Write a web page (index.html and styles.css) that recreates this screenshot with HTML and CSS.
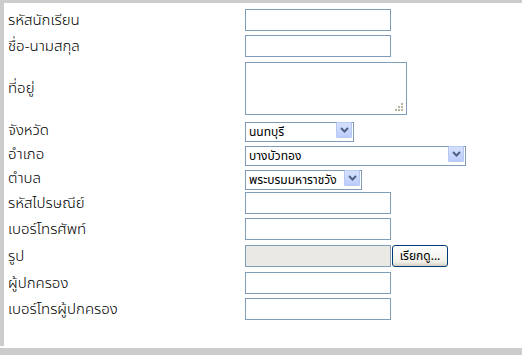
FILE: index.html
```html
<!DOCTYPE html>
<html lang="th">
<head>
    <meta charset="UTF-8">
    <title>ข้อมูลนักเรียน</title>
    <link rel="stylesheet" href="styles.css">
</head>
<body>
    <div id="frame">
        <form id="student-form">
            <label class="lbl">รหัสนักเรียน</label>
            <div class="fld"><input class="txt" type="text"></div>

            <label class="lbl">ชื่อ-นามสกุล</label>
            <div class="fld"><input class="txt" type="text"></div>

            <label class="lbl area-lbl">ที่อยู่</label>
            <div class="fld">
                <span class="area-wrap">
                    <textarea class="area"></textarea>
                    <svg class="grip" width="11" height="11" viewBox="0 0 11 11">
                        <rect x="8" y="2" width="2" height="2" fill="#b9b5a3"/>
                        <rect x="5" y="5" width="2" height="2" fill="#b9b5a3"/>
                        <rect x="8" y="5" width="2" height="2" fill="#b9b5a3"/>
                        <rect x="2" y="8" width="2" height="2" fill="#b9b5a3"/>
                        <rect x="5" y="8" width="2" height="2" fill="#b9b5a3"/>
                        <rect x="8" y="8" width="2" height="2" fill="#b9b5a3"/>
                    </svg>
                </span>
            </div>

            <label class="lbl sel-row">จังหวัด</label>
            <div class="fld sel-row">
                <span class="sel-wrap w-prov">
                    <select class="sel"><option>นนทบุรี</option></select>
                    <span class="sel-btn"><svg width="9" height="6" viewBox="0 0 9 6"><path d="M1 1 L4.5 4.5 L8 1" fill="none" stroke="#4d6185" stroke-width="2"/></svg></span>
                </span>
            </div>

            <label class="lbl sel-row">อำเภอ</label>
            <div class="fld sel-row">
                <span class="sel-wrap w-dist">
                    <select class="sel"><option>บางบัวทอง</option></select>
                    <span class="sel-btn"><svg width="9" height="6" viewBox="0 0 9 6"><path d="M1 1 L4.5 4.5 L8 1" fill="none" stroke="#4d6185" stroke-width="2"/></svg></span>
                </span>
            </div>

            <label class="lbl sel-row">ตำบล</label>
            <div class="fld sel-row">
                <span class="sel-wrap w-sub">
                    <select class="sel"><option>พระบรมมหาราชวัง</option></select>
                    <span class="sel-btn"><svg width="9" height="6" viewBox="0 0 9 6"><path d="M1 1 L4.5 4.5 L8 1" fill="none" stroke="#4d6185" stroke-width="2"/></svg></span>
                </span>
            </div>

            <label class="lbl">รหัสไปรษณีย์</label>
            <div class="fld"><input class="txt" type="text"></div>

            <label class="lbl">เบอร์โทรศัพท์</label>
            <div class="fld"><input class="txt" type="text"></div>

            <label class="lbl">รูป</label>
            <div class="fld file-row">
                <input class="txt file-path" type="text" readonly>
                <button class="browse" type="button">เรียกดู...</button>
            </div>

            <label class="lbl">ผู้ปกครอง</label>
            <div class="fld"><input class="txt" type="text"></div>

            <label class="lbl">เบอร์โทรผู้ปกครอง</label>
            <div class="fld"><input class="txt" type="text"></div>
        </form>
    </div>
    <div id="footer-bar"></div>
</body>
</html>
```

FILE: styles.css
```css
*{
    padding: 0;
    margin: 0;
    box-sizing: border-box;
}
body{
    background: #ffffff;
    font-family: Tahoma, "Noto Sans Thai", "Loma", "Garuda", "DejaVu Sans", sans-serif;
    font-size: 15px;
    color: #000000;
}
#frame{
    height: 346px;
    border-top: 3px solid #cccccc;
    border-left: 4px solid #cccccc;
    padding: 6px 0 0 4px;
}
#footer-bar{
    margin-top: 2px;
    height: 7px;
    background: #cccccc;
}
#student-form{
    display: grid;
    grid-template-columns: 237px auto;
    grid-template-rows: 26px 27px 58px 24px 24px 24px 26px 27px 27px 26px 22px;
}
.lbl{
    height: 22px;
    display: flex;
    align-items: center;
    white-space: nowrap;
    font-weight: 300;
}
.lbl.sel-row{
    height: 20px;
}
.lbl.area-lbl{
    height: 53px;
}
.fld{
    display: flex;
    align-items: flex-start;
}
.txt{
    width: 146px;
    height: 22px;
    border: 1px solid #7f9db9;
    background: #ffffff;
    font-size: 13px;
    padding: 1px 3px;
}
.area-wrap{
    position: relative;
    display: block;
    width: 162px;
    height: 53px;
}
.area{
    display: block;
    width: 162px;
    height: 53px;
    border: 1px solid #7f9db9;
    resize: none;
    font-size: 13px;
}
.grip{
    position: absolute;
    right: 3px;
    bottom: 3px;
}
.sel-wrap{
    position: relative;
    display: block;
    height: 20px;
}
.w-prov{ width: 109px; }
.w-dist{ width: 221px; }
.w-sub{ width: 117px; }
.sel{
    -webkit-appearance: none;
    appearance: none;
    width: 100%;
    height: 20px;
    border: 1px solid #7f9db9;
    background: #ffffff;
    font-family: Tahoma, "Noto Sans Thai", "Loma", "DejaVu Sans", sans-serif;
    font-size: 12px;
    color: #000000;
    padding: 0 18px 0 3px;
    border-radius: 0;
    outline: none;
}
.sel-btn{
    position: absolute;
    top: 2px;
    right: 2px;
    width: 16px;
    height: 16px;
    background: linear-gradient(#d4e1fc, #bccdfa);
    border: 1px solid #b5c8f6;
    border-radius: 1px;
    display: flex;
    align-items: center;
    justify-content: center;
}
.file-row{
    gap: 1px;
}
.file-path{
    background: #ebe9e3;
}
.browse{
    width: 56px;
    height: 22px;
    border: 1px solid #003c74;
    border-radius: 3px;
    background: linear-gradient(#ffffff, #f0efe8 80%, #d6d0c5);
    font-family: Tahoma, "Noto Sans Thai", "Loma", "DejaVu Sans", sans-serif;
    font-size: 12px;
    color: #000000;
}
```
